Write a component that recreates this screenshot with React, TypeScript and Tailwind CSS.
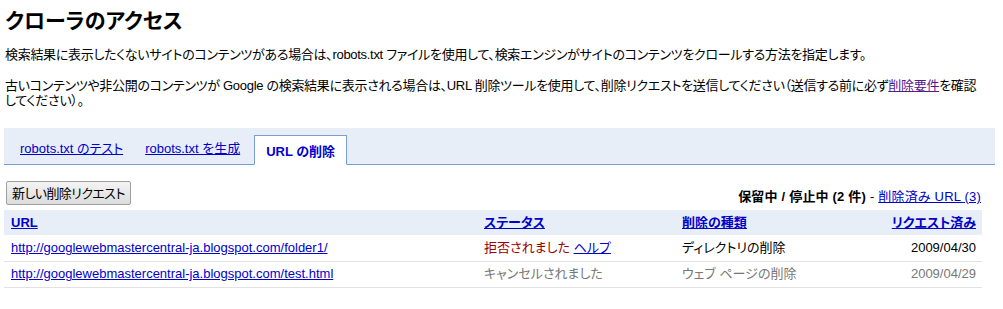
export default function App() {
  const font = "[font-family:'Liberation_Sans','Noto_Sans_CJK_JP',sans-serif] [font-feature-settings:'palt']";
  const link = "text-[#0000cc] underline";

  return (
    <div className={`${font} bg-white text-black text-[13px] min-h-[309px] pl-[4px] pr-[8px] pt-[8px]`}>
      <h1 className="text-[21px] font-bold leading-[26px] pl-[1px]">クローラのアクセス</h1>

      <p className="mt-[13px] leading-[16px] pl-[1px] tracking-[-0.3px]">
        検索結果に表示したくないサイトのコンテンツがある場合は、robots.txt ファイルを使用して、検索エンジンがサイトのコンテンツをクロールする方法を指定します。
      </p>

      <p className="mt-[15px] leading-[15px] pl-[1px] tracking-[-0.3px]">
        <span className="whitespace-nowrap">
          古いコンテンツや非公開のコンテンツが Google の検索結果に表示される場合は、URL 削除ツールを使用して、削除リクエストを送信してください（送信する前に必ず
          <a className="text-[#551a8b] underline">削除要件</a>を確認
        </span>
        <br />
        してください）。
      </p>

      {/* Tabs */}
      <div className="mt-[20px] h-[37px] bg-[#e8eef8] border-b border-[#7a9bd8] flex items-end pl-[5px]">
        <a className={`${link} px-[11px] pb-[6px]`}>robots.txt のテスト</a>
        <a className={`${link} px-[11px] pb-[6px]`}>robots.txt を生成</a>
        <div className="ml-[3px] -mb-px h-[30px] px-[11px] pt-[6px] bg-white border border-b-white border-[#7a9bd8] font-bold text-[#0000cc]">
          URL の削除
        </div>
      </div>

      {/* Toolbar */}
      <div className="w-[978px] mt-[16px] flex items-end justify-between">
        <button className="ml-[2px] h-[24px] px-[5px] border border-[#a0a0a0] rounded-[2px] bg-gradient-to-b from-[#f4f4f4] to-[#dcdcdc] text-black leading-none tracking-[-0.6px]">
          新しい削除リクエスト
        </button>
        <div className="leading-[16px] pr-[1px] tracking-[0.2px]">
          <span className="font-bold">保留中 / 停止中 (2 件)</span> -{" "}
          <a className={link}>削除済み URL (3)</a>
        </div>
      </div>

      {/* Table */}
      <table className="w-[978px] mt-[5px] border-collapse">
        <thead>
          <tr className="bg-[#e8eef8] h-[25px]">
            <th className="w-[473px] text-left pl-[7px] font-bold">
              <a className={link}>URL</a>
            </th>
            <th className="w-[198px] text-left pl-[7px] font-bold">
              <a className={link}>ステータス</a>
            </th>
            <th className="w-[200px] text-left pl-[7px] font-bold">
              <a className={link}>削除の種類</a>
            </th>
            <th className="text-right pr-[6px] font-bold">
              <a className={link}>リクエスト済み</a>
            </th>
          </tr>
        </thead>
        <tbody>
          <tr className="h-[26px] border-b border-[#e2e2e2]">
            <td className="pl-[7px]">
              <a className={link}>http://googlewebmastercentral-ja.blogspot.com/folder1/</a>
            </td>
            <td className="pl-[7px]">
              <span className="text-[#990000]">拒否されました</span> <a className={link}>ヘルプ</a>
            </td>
            <td className="pl-[7px]">ディレクトリの削除</td>
            <td className="text-right pr-[6px]">2009/04/30</td>
          </tr>
          <tr className="h-[26px] border-b border-[#e2e2e2] text-[#777777]">
            <td className="pl-[7px]">
              <a className={link}>http://googlewebmastercentral-ja.blogspot.com/test.html</a>
            </td>
            <td className="pl-[7px]">キャンセルされました</td>
            <td className="pl-[7px]">ウェブ ページの削除</td>
            <td className="text-right pr-[6px]">2009/04/29</td>
          </tr>
        </tbody>
      </table>
    </div>
  );
}
